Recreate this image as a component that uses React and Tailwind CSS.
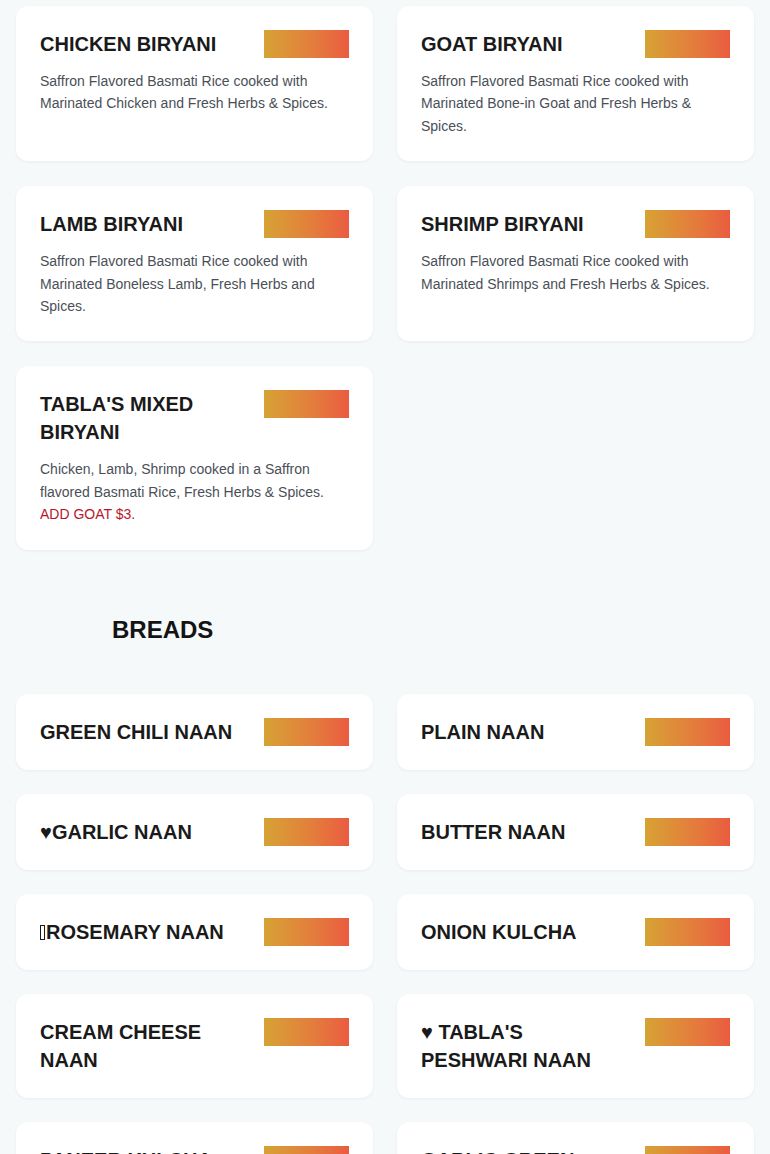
import React from "react";

const biryanis = [
  {
    name: "CHICKEN BIRYANI",
    desc: "Saffron Flavored Basmati Rice cooked with Marinated Chicken and Fresh Herbs & Spices.",
  },
  {
    name: "GOAT BIRYANI",
    desc: "Saffron Flavored Basmati Rice cooked with Marinated Bone-in Goat and Fresh Herbs & Spices.",
  },
  {
    name: "LAMB BIRYANI",
    desc: "Saffron Flavored Basmati Rice cooked with Marinated Boneless Lamb, Fresh Herbs and Spices.",
  },
  {
    name: "SHRIMP BIRYANI",
    desc: "Saffron Flavored Basmati Rice cooked with Marinated Shrimps and Fresh Herbs & Spices.",
  },
  {
    name: "TABLA'S MIXED BIRYANI",
    desc: "Chicken, Lamb, Shrimp cooked in a Saffron flavored Basmati Rice, Fresh Herbs & Spices.",
    note: "ADD GOAT $3.",
  },
];

const breads = [
  { name: "GREEN CHILI NAAN" },
  { name: "PLAIN NAAN" },
  { name: "\u2665GARLIC NAAN" },
  { name: "BUTTER NAAN" },
  { name: "ROSEMARY NAAN", tofu: true },
  { name: "ONION KULCHA" },
  { name: "CREAM CHEESE NAAN" },
  { name: "\u2665 TABLA'S PESHWARI NAAN" },
  { name: "PANEER KULCHA" },
  { name: "GARLIC GREEN CHILI NAAN" },
];

function MenuCard({ item }) {
  return (
    <div className="rounded-xl bg-white p-6 shadow-[0_1px_3px_rgba(15,40,60,0.06)]">
      <div className="flex items-start justify-between gap-4">
        <h3 className="w-[208px] text-xl leading-7 font-bold text-[#1a1a1a]">
          {item.tofu && (
            <span className="mr-px inline-block h-[15px] w-[5px] border border-[#1a1a1a] align-[-1px]" />
          )}
          {item.name}
        </h3>
        <div className="h-7 w-[85px] shrink-0 bg-gradient-to-r from-[#d6a234] to-[#ea5b40]" />
      </div>
      {item.desc && (
        <p className="mt-3 text-sm leading-[1.6] text-[#4a4f57]">
          {item.desc}
          {item.note && (
            <>
              <br />
              <span className="text-[#b5172b]">{item.note}</span>
            </>
          )}
        </p>
      )}
    </div>
  );
}

export default function App() {
  return (
    <div className="min-h-screen bg-[#f5f9fa] px-4 pt-[6px] font-['Liberation_Sans',Arial,sans-serif]">
      <div className="grid grid-cols-2 gap-x-6 gap-y-[25px]">
        {biryanis.map((item) => (
          <MenuCard item={item} key={item.name} />
        ))}
      </div>

      <h2 className="mt-16 mb-12 pl-24 text-2xl leading-8 font-bold text-[#141414]">BREADS</h2>

      <div className="grid grid-cols-2 gap-6 pb-10">
        {breads.map((item) => (
          <MenuCard item={item} key={item.name} />
        ))}
      </div>
    </div>
  );
}
